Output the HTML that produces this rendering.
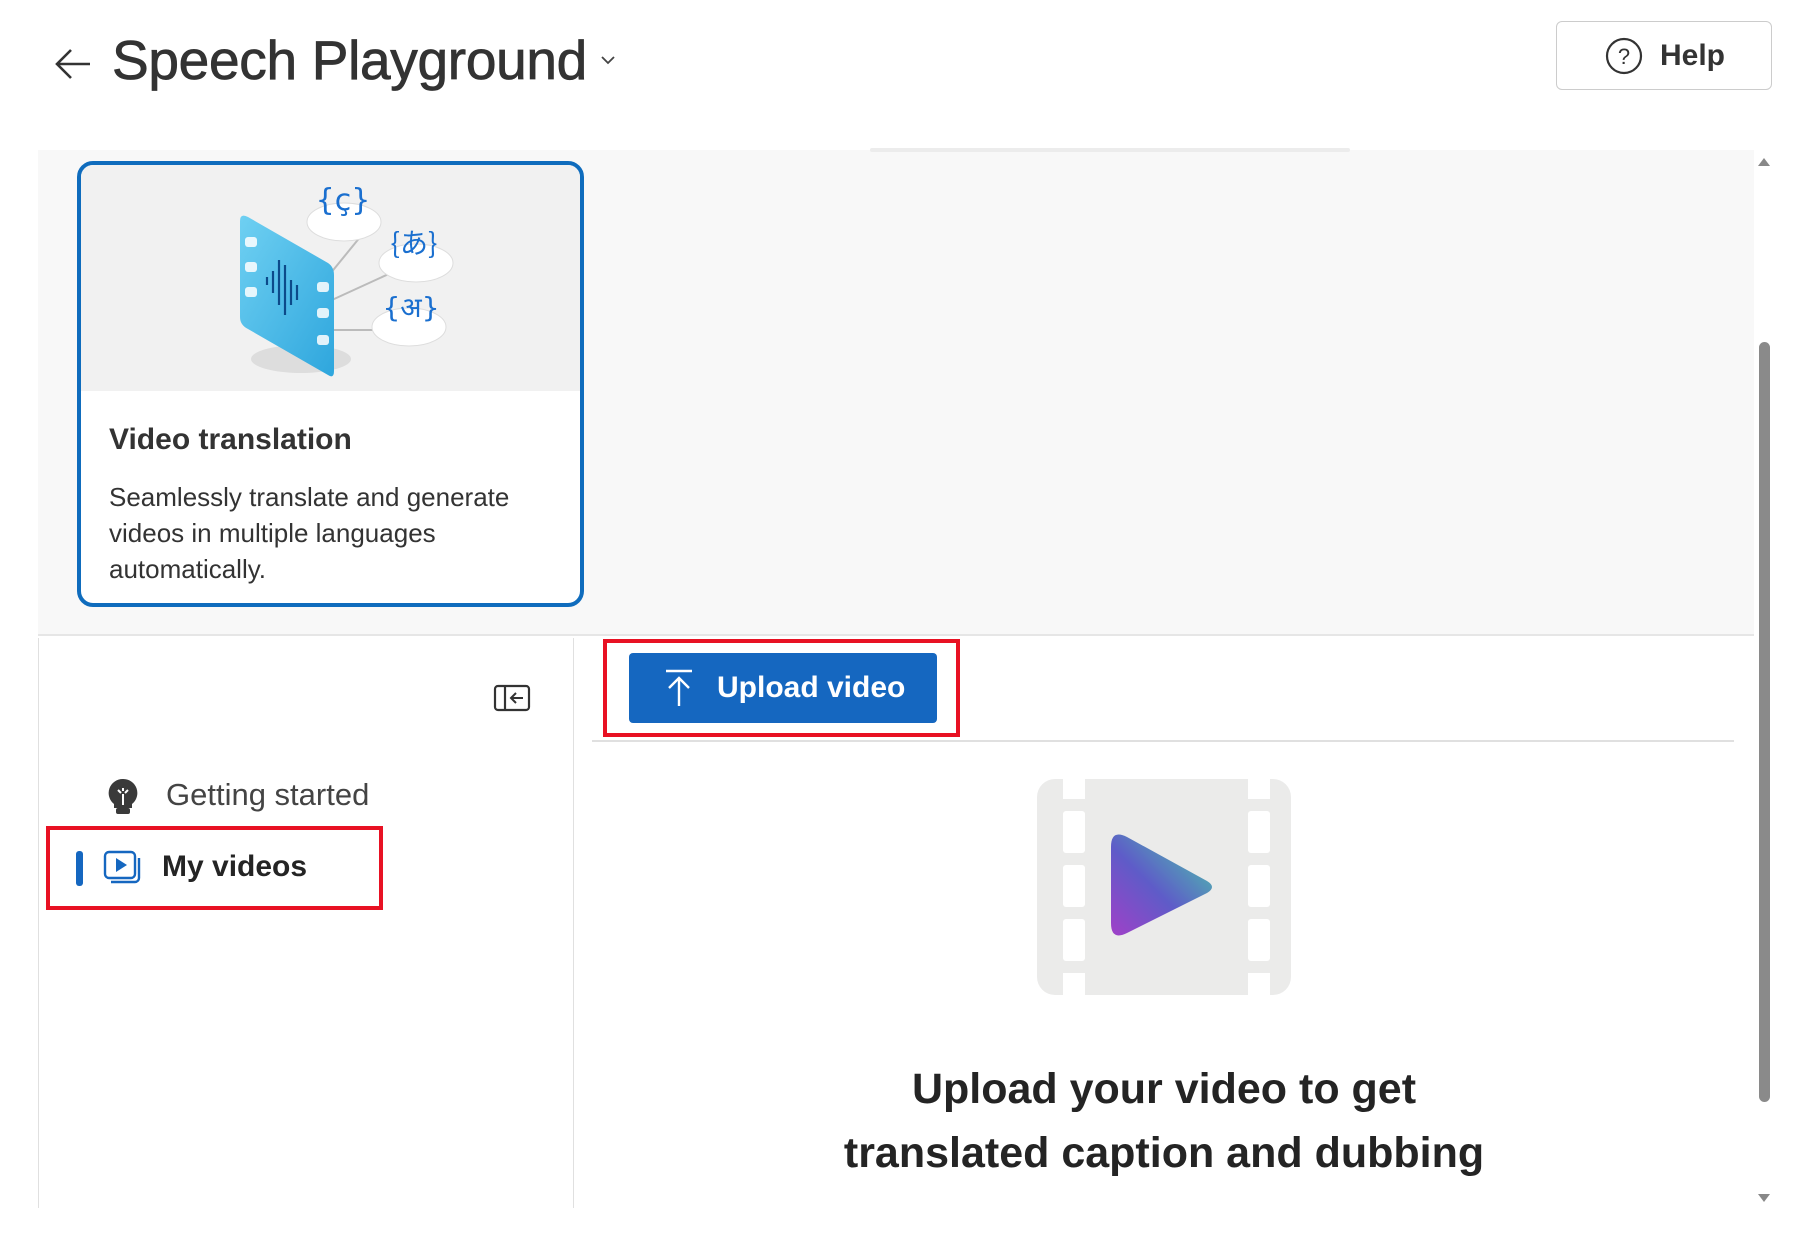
<!DOCTYPE html>
<html><head><meta charset="utf-8"><style>
*{margin:0;padding:0;box-sizing:border-box}
body{width:1798px;height:1234px;background:#fff;font-family:"Liberation Sans","Noto Sans CJK JP",sans-serif;color:#242424;position:relative;overflow:hidden}
.abs{position:absolute}
</style></head><body>
<svg class="abs" style="left:54px;top:44px" width="40" height="40" viewBox="0 0 40 40"><path d="M36 20H4M17 6L3 20l14 14" fill="none" stroke="#333" stroke-width="2.6"/></svg>
<div class="abs" style="left:112px;top:28px;font-size:55px;font-weight:400;color:#333;letter-spacing:-0.3px;-webkit-text-stroke:0.8px #333">Speech Playground</div>
<svg class="abs" style="left:600px;top:54px" width="16" height="12" viewBox="0 0 16 12"><path d="M2 3l6 6 6-6" fill="none" stroke="#444" stroke-width="1.8"/></svg>
<div class="abs" style="left:1556px;top:21px;width:216px;height:69px;border:1.5px solid #ccc;border-radius:6px"></div>
<svg class="abs" style="left:1605px;top:37px" width="38" height="38" viewBox="0 0 38 38"><circle cx="19" cy="19" r="17" fill="none" stroke="#333" stroke-width="2.2"/><text x="19" y="27" text-anchor="middle" font-size="22" font-family="Liberation Sans" fill="#333">?</text></svg>
<div class="abs" style="left:1660px;top:39px;font-size:30px;font-weight:600;color:#333">Help</div>

<div class="abs" style="left:38px;top:150px;width:1716px;height:486px;background:#f8f8f8;border-bottom:2px solid #e6e6e6"></div>
<div class="abs" style="left:870px;top:148px;width:480px;height:4px;background:#ececec;border-radius:2px"></div>
<div class="abs" style="left:77px;top:161px;width:507px;height:446px;border:4px solid #0f6cbd;border-radius:16px;background:#fff;overflow:hidden">
 <div style="height:226px;background:#f1f1f1;position:relative">
  <svg width="499" height="226" viewBox="0 0 499 226" style="position:absolute;left:0;top:0">
   <ellipse cx="220" cy="194" rx="50" ry="14" fill="#ddd"/>
   <line x1="240" y1="120" x2="293" y2="55" stroke="#bbb" stroke-width="2"/>
   <line x1="240" y1="140" x2="360" y2="85" stroke="#bbb" stroke-width="2"/>
   <line x1="240" y1="165" x2="345" y2="165" stroke="#bbb" stroke-width="2"/>
   <ellipse cx="263" cy="57" rx="37" ry="19" fill="#fff" stroke="#ddd"/>
   <ellipse cx="335" cy="98" rx="37" ry="19" fill="#fff" stroke="#ddd"/>
   <ellipse cx="328" cy="162" rx="37" ry="19" fill="#fff" stroke="#ddd"/>
   <defs><linearGradient id="g1" x1="0" y1="0" x2="1" y2="1"><stop offset="0" stop-color="#6fd0f2"/><stop offset="1" stop-color="#2ea6dd"/></linearGradient></defs>
   <path d="M159 56q0-8 8 -4l80 46q6 4 6 12v96q0 8-6 4l-80-46q-8-4-8-12z" fill="url(#g1)"/>
   <g fill="#fff" opacity=".85"><rect x="164" y="72" width="12" height="10" rx="3"/><rect x="164" y="97" width="12" height="10" rx="3"/><rect x="164" y="122" width="12" height="10" rx="3"/><rect x="236" y="117" width="12" height="10" rx="3"/><rect x="236" y="143" width="12" height="10" rx="3"/><rect x="236" y="170" width="12" height="10" rx="3"/></g>
   <g stroke="#0c4a8a" stroke-width="2.2"><line x1="186" y1="112" x2="186" y2="120"/><line x1="192" y1="106" x2="192" y2="128"/><line x1="198" y1="95" x2="198" y2="140"/><line x1="204" y1="100" x2="204" y2="150"/><line x1="210" y1="115" x2="210" y2="140"/><line x1="216" y1="120" x2="216" y2="135"/></g>
   <text x="262" y="45" text-anchor="middle" font-size="30" fill="#1a6fcf" font-family="DejaVu Sans">{ç}</text>
   <text x="333" y="88" text-anchor="middle" font-size="28" fill="#1a6fcf" font-family="Noto Sans CJK JP">{あ}</text>
   <text x="330" y="152" text-anchor="middle" font-size="28" fill="#1a6fcf" font-family="DejaVu Sans">{अ}</text>
  </svg>
 </div>
 <div style="position:absolute;left:28px;top:258px;font-size:30px;font-weight:600;color:#333">Video translation</div>
 <div style="position:absolute;left:28px;top:314px;width:460px;font-size:26px;line-height:36px;color:#333">Seamlessly translate and generate videos in multiple languages automatically.</div>
</div>

<div class="abs" style="left:38px;top:638px;width:1px;height:570px;background:#e0e0e0"></div>
<div class="abs" style="left:573px;top:638px;width:1px;height:570px;background:#e0e0e0"></div>
<svg class="abs" style="left:493px;top:684px" width="38" height="28" viewBox="0 0 38 28"><rect x="2" y="2" width="34" height="24" rx="3" fill="none" stroke="#333" stroke-width="2.2"/><line x1="12" y1="2" x2="12" y2="26" stroke="#333" stroke-width="2.2"/><path d="M30 14H18M23 9l-5 5 5 5" fill="none" stroke="#333" stroke-width="2"/></svg>
<svg class="abs" style="left:106px;top:777px" width="34" height="38" viewBox="0 0 34 38"><path d="M17 2a14 14 0 0 0-9 25v4h18v-4A14 14 0 0 0 17 2z" fill="#3a3a3a"/><rect x="10" y="31" width="14" height="6" rx="2" fill="#3a3a3a"/><path d="M17 28V17M12 13l3 3M22 13l-3 3M17 11v3" stroke="#fff" stroke-width="2"/></svg>
<div class="abs" style="left:166px;top:777px;font-size:31px;color:#444">Getting started</div>
<div class="abs" style="left:46px;top:826px;width:337px;height:84px;border:4px solid #e81123"></div>
<div class="abs" style="left:76px;top:851px;width:7px;height:35px;background:#1567c0;border-radius:3px"></div>
<svg class="abs" style="left:103px;top:850px" width="40" height="36" viewBox="0 0 40 36"><rect x="2" y="2" width="30" height="26" rx="4" fill="none" stroke="#1567c0" stroke-width="2.4"/><path d="M36 8v20a4 4 0 0 1-4 4H8" fill="none" stroke="#1567c0" stroke-width="2.4"/><path d="M13 8l11 7-11 7z" fill="#1567c0"/></svg>
<div class="abs" style="left:162px;top:850px;font-size:30px;font-weight:600;color:#242424">My videos</div>

<div class="abs" style="left:603px;top:639px;width:357px;height:98px;border:4px solid #e81123"></div>
<div class="abs" style="left:629px;top:653px;width:308px;height:70px;background:#1567c0;border-radius:4px"></div>
<svg class="abs" style="left:664px;top:668px" width="30" height="40" viewBox="0 0 30 40"><path d="M2 3h26M15 38V10M5 20l10-10 10 10" fill="none" stroke="#fff" stroke-width="2.4"/></svg>
<div class="abs" style="left:717px;top:671px;font-size:30px;font-weight:600;color:#fff">Upload video</div>
<div class="abs" style="left:592px;top:740px;width:1142px;height:2px;background:#e0e0e0"></div>

<svg class="abs" style="left:1035px;top:775px" width="260" height="222" viewBox="0 0 260 222">
 <defs><linearGradient id="pg" x1="0" y1="1" x2="1" y2="0"><stop offset="0" stop-color="#a040c8"/><stop offset=".45" stop-color="#5e5cc8"/><stop offset="1" stop-color="#4ad0a8"/></linearGradient></defs>
 <rect x="2" y="4" width="254" height="216" rx="18" fill="#ebebea"/>
 <g fill="#fff"><rect x="28" y="4" width="22" height="20"/><rect x="28" y="36" width="22" height="42" rx="3"/><rect x="28" y="90" width="22" height="42" rx="3"/><rect x="28" y="144" width="22" height="42" rx="3"/><rect x="28" y="198" width="22" height="22"/>
 <rect x="213" y="4" width="22" height="20"/><rect x="213" y="36" width="22" height="42" rx="3"/><rect x="213" y="90" width="22" height="42" rx="3"/><rect x="213" y="144" width="22" height="42" rx="3"/><rect x="213" y="198" width="22" height="22"/></g>
 <path d="M92 62q-16-8-16 10v76q0 18 16 10l80-40q10-6 0-12z" fill="url(#pg)"/>
</svg>
<div class="abs" style="left:700px;top:1057px;width:928px;text-align:center;font-size:43px;line-height:64px;font-weight:600;color:#242424">Upload your video to get<br>translated caption and dubbing</div>

<div class="abs" style="left:1754px;top:150px;width:23px;height:1058px;background:#fff"></div>
<svg class="abs" style="left:1757px;top:156px" width="14" height="12"><path d="M1 10L7 2l6 8z" fill="#888"/></svg>
<div class="abs" style="left:1759px;top:342px;width:11px;height:760px;background:#8a8a8a;border-radius:6px"></div>
<svg class="abs" style="left:1757px;top:1192px" width="14" height="12"><path d="M1 2h12L7 10z" fill="#888"/></svg>
</body></html>
